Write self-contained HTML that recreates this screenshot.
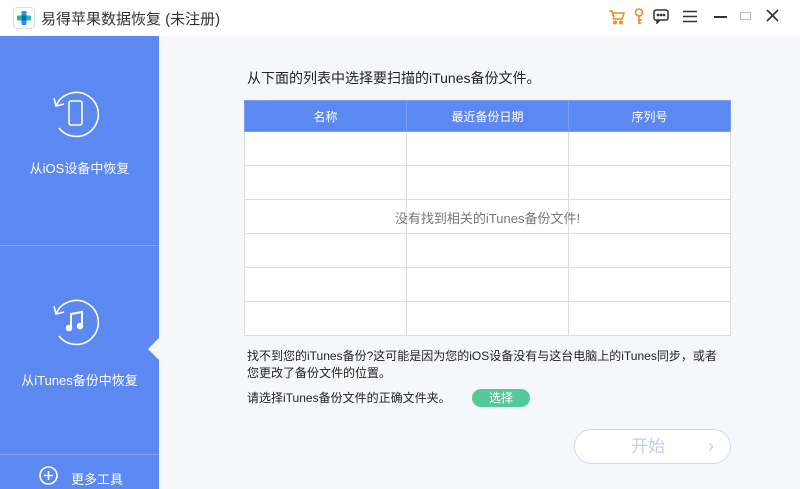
<!DOCTYPE html>
<html><head><meta charset="utf-8"><style>
*{margin:0;padding:0;box-sizing:border-box}
body{width:800px;height:489px;overflow:hidden;font-family:"Liberation Sans","Noto Sans CJK SC",sans-serif;background:#f6f7fb;position:relative;color:#333}
.title{position:absolute;left:0;top:0;width:800px;height:36px;background:#fff}
.title .t{position:absolute;left:41px;top:8px;font-size:15px;color:#333}
.side{position:absolute;left:0;top:36px;width:159px;height:453px;background:#5c88f1}
.hr{position:absolute;left:0;width:159px;height:1px;background:#86a6f5}
.lbl{position:absolute;width:159px;text-align:center;color:#fff;font-size:13px}
.a{position:absolute;font-size:13px;color:#222}
table{position:absolute;left:244px;top:100px;width:487px;border-collapse:collapse;background:#fff}
td,th{border:1px solid #dcdcdc;height:34px;width:162px}
th{background:#5c88f1;color:#fff;font-weight:normal;font-size:12px;height:31px;border-color:#7b9ef3}
</style></head><body>
<div class="title">
<svg style="position:absolute;left:13px;top:7px" width="22" height="22" viewBox="0 0 22 22"><rect x="0.5" y="0.5" width="21" height="21" rx="4" fill="#fff" stroke="#ddd"/><rect x="8.5" y="4" width="5" height="14" rx="1" fill="#2d8ef0"/><rect x="4" y="8.5" width="14" height="5" rx="1" fill="#1fc2a0"/><rect x="8.5" y="8.5" width="5" height="5" fill="#1a5fd6"/></svg>
<span class="t">易得苹果数据恢复 (未注册)</span>
<svg style="position:absolute;left:608px;top:9px" width="18" height="16" viewBox="0 0 18 16" fill="none" stroke="#f28a1a" stroke-width="1.6"><path d="M1 2h3l2 8h8l2-6H5"/><circle cx="7" cy="13.5" r="1.2"/><circle cx="13" cy="13.5" r="1.2"/></svg>
<svg style="position:absolute;left:633px;top:8px" width="12" height="17" viewBox="0 0 12 17" fill="none" stroke="#f28a1a" stroke-width="1.6"><circle cx="6" cy="4.5" r="3.5"/><path d="M6 8v8M6 12h3M6 15h2.5"/></svg>
<svg style="position:absolute;left:653px;top:9px" width="16" height="15" viewBox="0 0 16 15" fill="none" stroke="#333" stroke-width="1.5"><rect x="1" y="1" width="14" height="10" rx="2"/><path d="M4 11v3l3-3"/><circle cx="5" cy="6" r=".6" fill="#333"/><circle cx="8" cy="6" r=".6" fill="#333"/><circle cx="11" cy="6" r=".6" fill="#333"/></svg>
<svg style="position:absolute;left:683px;top:10px" width="14" height="13" stroke="#333" stroke-width="1.6"><path d="M0 1.5h14M0 6.5h14M0 11.5h14"/></svg>
<div style="position:absolute;left:714px;top:16px;width:13px;height:2px;background:#333"></div>
<div style="position:absolute;left:740px;top:12px;width:11px;height:8px;border:1.5px solid #bbb"></div>
<svg style="position:absolute;left:766px;top:9px" width="13" height="13" stroke="#333" stroke-width="1.6"><path d="M1 1l11 11M12 1L1 12"/></svg>
</div>
<div class="side">
<svg style="position:absolute;left:50px;top:52px" width="50" height="50" viewBox="0 0 50 50" fill="none" stroke="#fff" stroke-width="1.6"><path d="M6 18A22 22 0 1 1 9 40"/><path d="M4 10l2 8 8-2"/><rect x="19" y="13" width="13" height="24" rx="2"/></svg>
<div class="lbl" style="top:122px">从iOS设备中恢复</div>
<div class="hr" style="top:209px"></div>
<svg style="position:absolute;left:50px;top:260px" width="50" height="50" viewBox="0 0 50 50" fill="none" stroke="#fff" stroke-width="1.6"><path d="M6 18A22 22 0 1 1 9 40"/><path d="M4 10l2 8 8-2"/><path d="M21 32V18l11-2v13" stroke-width="2"/><circle cx="19" cy="32" r="2.5" fill="#fff"/><circle cx="30" cy="30" r="2.5" fill="#fff"/></svg>
<div class="lbl" style="top:334px">从iTunes备份中恢复</div>
<div style="position:absolute;left:148px;top:302px;width:0;height:0;border-top:11px solid transparent;border-bottom:11px solid transparent;border-right:11px solid #f6f7fb"></div>
<div class="hr" style="top:418px"></div>
<svg style="position:absolute;left:39px;top:430px" width="19" height="19" fill="none" stroke="#fff" stroke-width="1.6"><circle cx="9.5" cy="9.5" r="8.5"/><path d="M9.5 5v9M5 9.5h9"/></svg>
<div class="a" style="left:71px;top:433px;color:#fff">更多工具</div>
</div>
<div class="a" style="left:247px;top:68px;font-size:14px">从下面的列表中选择要扫描的iTunes备份文件。</div>
<table>
<tr><th>名称</th><th>最近备份日期</th><th>序列号</th></tr>
<tr><td></td><td></td><td></td></tr><tr><td></td><td></td><td></td></tr><tr><td></td><td></td><td></td></tr>
<tr><td></td><td></td><td></td></tr><tr><td></td><td></td><td></td></tr><tr><td></td><td></td><td></td></tr>
</table>
<div class="a" style="left:244px;top:208px;width:487px;text-align:center;color:#777;font-size:13px">没有找到相关的iTunes备份文件!</div>
<div class="a" style="left:247px;top:348px;font-size:12px;line-height:17px;width:490px">找不到您的iTunes备份?这可能是因为您的iOS设备没有与这台电脑上的iTunes同步，或者<br>您更改了备份文件的位置。</div>
<div class="a" style="left:247px;top:389px;font-size:12px">请选择iTunes备份文件的正确文件夹。</div>
<div style="position:absolute;left:472px;top:389px;width:58px;height:18px;border-radius:9px;background:#52c996;color:#fff;font-size:12px;text-align:center;line-height:18px">选择</div>
<div style="position:absolute;left:574px;top:429px;width:157px;height:35px;border-radius:18px;border:1px solid #d2dcea;background:#fff;color:#c5cfdd;font-size:17px;line-height:33px;padding-left:56px">开始<span style="position:absolute;right:16px;font-size:18px">›</span></div>
</body></html>
